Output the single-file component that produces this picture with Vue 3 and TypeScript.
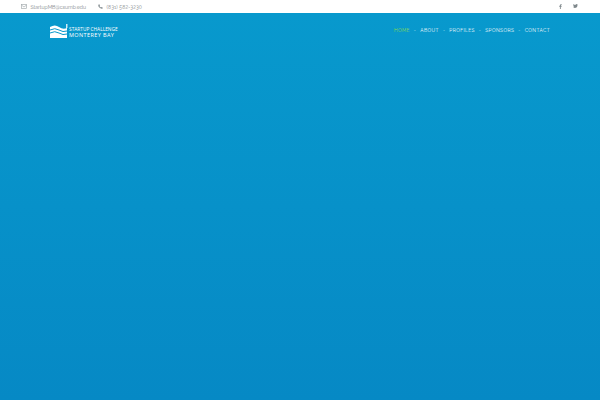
<script setup lang="ts">
const navItems = ['HOME', 'ABOUT', 'PROFILES', 'SPONSORS', 'CONTACT'];
</script>

<template>
  <div class="page">
    <div class="topbar">
      <div class="contact">
        <span class="contact-item">
          <svg width="6" height="5" viewBox="0 0 7 6" fill="none" stroke="#a3aaad" stroke-width="0.8">
            <rect x="0.4" y="0.4" width="6.2" height="5.2" />
            <path d="M0.6 1.4 L3.5 3.6 L6.4 1.4" />
          </svg>
          <span>StartupMB@csumb.edu</span>
        </span>
        <span class="contact-item">
          <svg width="5" height="5" viewBox="0 0 6 6" fill="#7f888c">
            <path d="M0.4 0.8 L1.6 0.2 L2.4 1.7 L1.7 2.3 Q2.4 3.5 3.6 4.2 L4.3 3.5 L5.8 4.4 L5.2 5.6 Q2.8 5.8 1.3 4 Q0.1 2.5 0.4 0.8 Z" />
          </svg>
          <span class="phone">(831) 582-3230</span>
        </span>
      </div>
      <div class="social">
        <svg width="3" height="5" viewBox="0 0 4 7" fill="#7f888c">
          <path d="M1.2 7 V3.8 H0.2 V2.6 H1.2 V1.7 Q1.2 0.2 2.6 0.2 H3.7 V1.4 H3 Q2.4 1.4 2.4 2 V2.6 H3.7 L3.5 3.8 H2.4 V7 Z" />
        </svg>
        <svg width="5" height="4.4" viewBox="0 0 8 7" fill="#7f888c">
          <path d="M8 0.9 Q7.5 1.1 7 1.2 Q7.6 0.8 7.8 0.2 Q7.2 0.5 6.7 0.6 Q6.1 0 5.4 0 Q4 0 4 1.7 Q2 1.6 0.6 0.1 Q0 1.4 1.1 2.4 Q0.7 2.4 0.3 2.2 Q0.4 3.4 1.6 3.8 Q1.2 3.9 0.9 3.8 Q1.2 4.8 2.4 5 Q1.3 5.9 0 5.7 Q1.2 6.5 2.6 6.5 Q7.2 6.4 7.2 1.7 Q7.7 1.4 8 0.9 Z" />
        </svg>
      </div>
    </div>

    <header class="hero">
      <div class="navrow">
        <div class="logo">
          <svg class="logo-mark" width="18" height="14" viewBox="0 0 18 14">
            <path d="M0 3 Q5 0 9 3 T17 4 L17 14 L0 14 Z" fill="#fff" />
            <path d="M0 6 Q5 3.4 9 6 T17 7" fill="none" stroke="#0899cd" stroke-width="1" />
            <path d="M0 9 Q5 6.4 9 9 T17 10" fill="none" stroke="#0899cd" stroke-width="1" />
            <path d="M16.8 0 V4" fill="none" stroke="#fff" stroke-width="1.2" />
          </svg>
          <div class="logo-text">
            <span class="logo-top">STARTUP CHALLENGE</span>
            <span class="logo-bottom">MONTEREY BAY</span>
          </div>
        </div>
        <nav class="nav">
          <template v-for="(item, i) in navItems" :key="item">
            <span v-if="i > 0" class="dot">-</span>
            <span class="nav-item" :class="{ active: i === 0 }">{{ item }}</span>
          </template>
        </nav>
      </div>
    </header>
  </div>
</template>

<style>
html,
body {
  margin: 0;
  padding: 0;
}
</style>

<style scoped>
.page {
  width: 600px;
  height: 400px;
  overflow: hidden;
  display: flex;
  flex-direction: column;
  font-family: Raleway, Lato, "Open Sans", sans-serif;
}

.topbar {
  height: 13px;
  background: #fff;
  display: flex;
  justify-content: space-between;
  align-items: center;
  padding: 0 22px 0 21px;
  flex-shrink: 0;
}

.contact {
  display: flex;
  gap: 12px;
  font-size: 5.1px;
  color: #7d8589;
}

.contact-item {
  display: flex;
  align-items: center;
  gap: 3.5px;
}

.phone {
  letter-spacing: 0.15px;
}

.social {
  display: flex;
  align-items: center;
  gap: 11px;
}

.hero {
  flex: 1;
  background: linear-gradient(180deg, #0899cd 0%, #0689c5 100%);
}

.navrow {
  display: flex;
  justify-content: space-between;
  align-items: center;
  padding: 11px 50px 0;
}

.logo {
  display: flex;
  align-items: flex-end;
  color: #fff;
}

.logo-mark {
  margin-right: 1px;
}

.logo-text {
  display: flex;
  flex-direction: column;
  line-height: 6px;
  font-family: "Open Sans", sans-serif;
}

.logo-top {
  font-size: 4.8px;
  white-space: nowrap;
}

.logo-bottom {
  font-size: 5.5px;
  letter-spacing: 0.4px;
  white-space: nowrap;
}

.nav {
  display: flex;
  align-items: center;
  gap: 4px;
  margin-bottom: 2px;
  font-size: 4.8px;
  letter-spacing: 0.4px;
  color: #f2f9fc;
}

.dot {
  color: #bde4f2;
}

.nav-item.active {
  color: #8bdc4e;
}
</style>
